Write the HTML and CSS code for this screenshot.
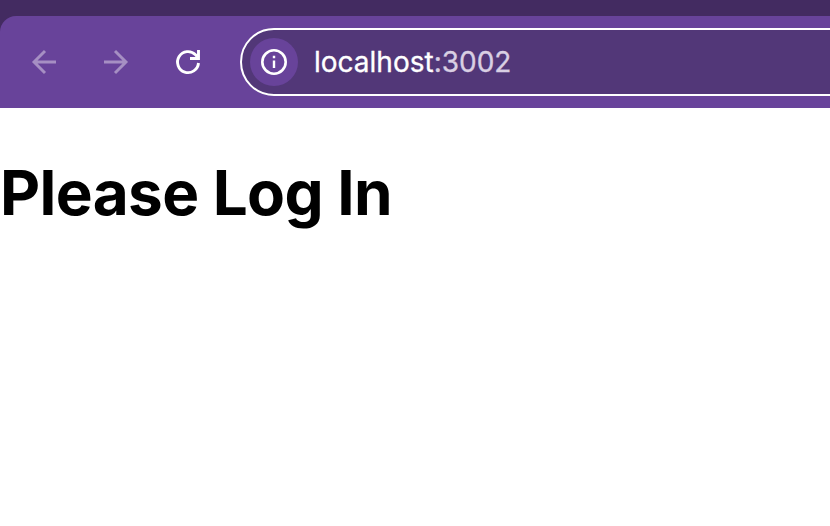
FILE: index.html
```html
<!DOCTYPE html>
<html lang="en">
<head>
<meta charset="utf-8">
<title>localhost:3002</title>
<link rel="stylesheet" href="styles.css">
</head>
<body>
<div class="tabstrip">
<nav class="toolbar">
<svg class="icon dim" viewBox="0 0 32 32"><path d="M28 16H6M17 5L6 16l11 11"/></svg>
<svg class="icon dim" viewBox="0 0 32 32"><path d="M4 16h22M15 5l11 11-11 11"/></svg>
<svg class="icon" viewBox="0 0 32 32"><path d="M26.5 17A10.500 10.500 0 1 1 23.500 8.700L26.500 12M26.500 4v8.500H18"/></svg>
<div class="address">
<span class="info"><svg viewBox="0 0 28 28"><circle cx="14" cy="14" r="11.700"/><path class="mark" d="M14 12.500v7.500M14 7.700v2.600"/></svg></span>
<span class="url">localhost<span class="port">:3002</span></span>
</div>
</nav>
</div>
<main><h1>Please Log In</h1></main>
</body>
</html>
```
FILE: styles.css
```css
* { box-sizing: border-box; }
body { margin: 0; background: #fff; font-family: Inter, sans-serif; overflow: hidden; }
.tabstrip { background: #432b61; padding-top: 16px; }
.toolbar { height: 92px; background: #68439a; border-top-left-radius: 16px; display: flex; align-items: center; padding-left: 28px; }
.icon { width: 32px; height: 32px; margin-right: 40px; flex: none; fill: none; stroke: #fff; stroke-width: 2.900; }
.dim { stroke: #a68fc3; }
.address { height: 68px; flex: 1; margin-left: -4px; margin-right: -40px; border: 2px solid #fff; border-radius: 34px; background: #523778; display: flex; align-items: center; padding-left: 8px; }
.info { width: 48px; height: 48px; border-radius: 50%; background: #68439a; display: grid; place-items: center; }
.info svg { width: 28px; height: 28px; fill: none; stroke: #fff; stroke-width: 2.600; }
.info .mark { stroke-width: 2.400; }
.url { margin-left: 16px; font-size: 28px; color: #fff; -webkit-text-stroke: 0.3px currentColor; }
.port { color: #d9cfe3; }
h1 { margin: 0; padding-top: 46px; font-size: 62px; line-height: 78px; font-weight: 700; letter-spacing: -0.6px; color: #000; }
```
